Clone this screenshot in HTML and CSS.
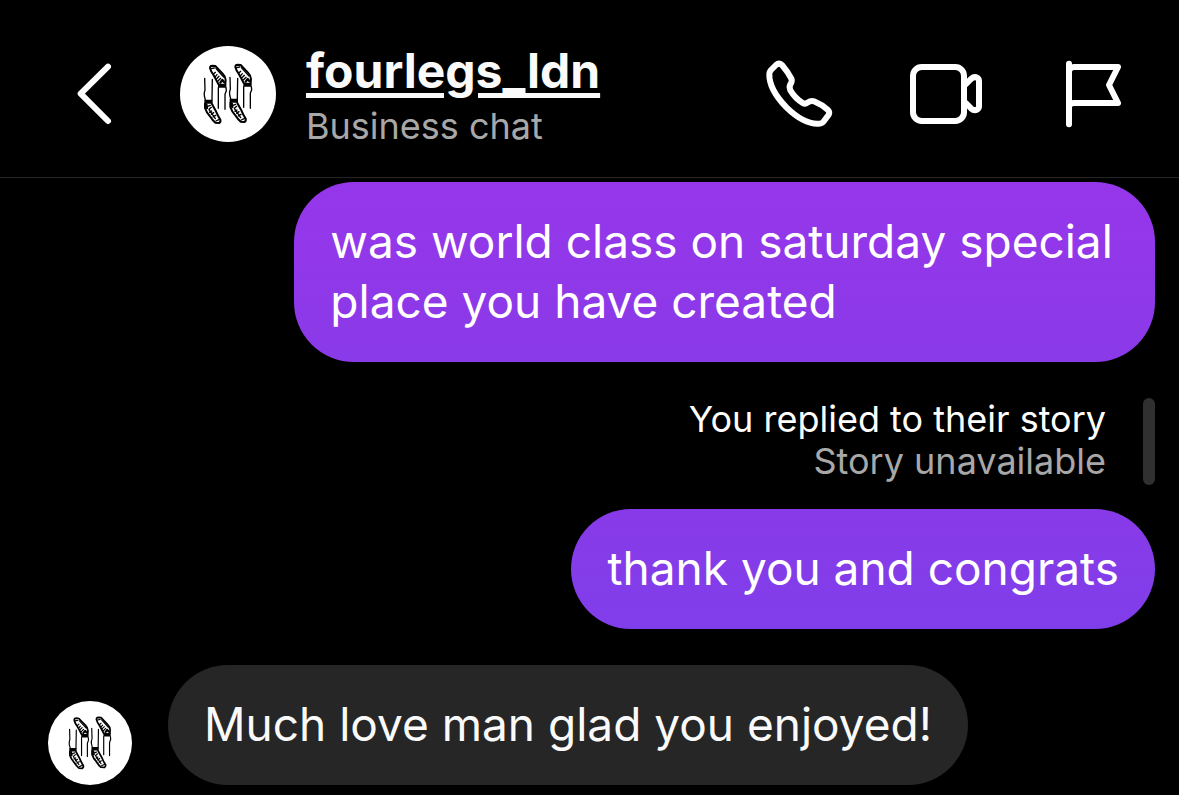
FILE: index.html
```
<!DOCTYPE html>
<html lang="en">
<head>
    <meta charset="UTF-8">
    <meta name="viewport" content="width=device-width, initial-scale=1.0">
    <title>fourlegs_ldn</title>
    <link rel="stylesheet" href="styles.css">
</head>
<body>
    <svg class="symbols" aria-hidden="true">
        <symbol id="logo" viewBox="30 30 288 288">
            <g id="legs" fill="none" stroke="#000" stroke-linecap="round" stroke-linejoin="round">
                <!-- upper boot -->
                <path stroke-width="6" d="M120 96Q120 89 127 89L136 90Q146 101 158 113Q167 122 167 132L166 143M120 96Q123 108 130 116Q137 128 145 144"/>
                <path stroke-width="4" d="M124 98L133 96M130 115L136 109M136 122L141 116M140 128L147 121M144 135L152 127M138 98L161 123"/>
                <path stroke-width="7" d="M151 140L157 132L162 138"/>
                <path stroke-width="12" stroke-linecap="butt" d="M144 149L169 149"/>
                <path stroke-width="4" d="M145 155L145 217M168 155L169 164L165 175L165 220"/>
                <!-- lower boot -->
                <path stroke-width="4" d="M104 127L105 162Q101 173 103 180L106 191M127 130L126 191"/>
                <path stroke-width="12" stroke-linecap="butt" d="M103 197L128 197"/>
                <path stroke-width="6" d="M105 203L105 216Q109 229 120 241Q128 254 136 260L147 261Q153 258 151 251Q144 241 138 226Q131 214 126 204"/>
                <path stroke-width="4" d="M113 211L121 208M117 220L124 214M125 225L119 229M131 230L124 235M137 238L129 243M148 250L138 255M118 222L136 248"/>
                <path stroke-width="7" d="M109 205L111 216"/>
            </g>
            <use href="#legs" x="76" y="-3"/>
        </symbol>
    </svg>

    <header class="header">
        <button class="icon-button" type="button" aria-label="Back">
            <svg width="40" height="72" viewBox="48 54 120 216">
                <path d="M144 80L62 161L144 243"/>
            </svg>
        </button>
        <svg class="avatar" role="img" aria-label="fourlegs_ldn"><use href="#logo"/></svg>
        <div class="title">
            <a class="name" href="#">fourlegs_ldn</a>
            <span class="subtitle">Business chat</span>
        </div>
        <div class="actions">
            <button class="icon-button" type="button" aria-label="Call">
                <svg width="74" height="72" viewBox="72 54 222 216">
                    <path d="M108 75Q117 67 126 75Q144 96 154 116Q157 122 153 130Q146 138 151 151Q165 175 188 189Q196 193 202 188Q213 181 222 184Q246 194 264 210Q270 216 266 224L252 243Q247 251 237 251C207 253 173 235 140 203C108 170 87 134 88 102Q88 96 93 90Z"/>
                </svg>
            </button>
            <button class="icon-button" type="button" aria-label="Video call">
                <svg width="78" height="72" viewBox="504 54 234 216">
                    <rect x="519" y="81" width="153" height="162" rx="26"/>
                    <path d="M676 134L694 116Q703 108 713 114Q717 117 717 123V199Q717 206 711 209Q702 213 694 206L676 188"/>
                </svg>
            </button>
            <button class="icon-button" type="button" aria-label="Labels">
                <svg width="68" height="72" viewBox="948 54 204 216">
                    <path d="M987 71V253M987 93Q990 81 1002 81H1134L1107 135L1134 189H1002Q990 189 987 200"/>
                </svg>
            </button>
        </div>
    </header>

    <main class="chat">
        <p class="bubble sent sent-first">was world class on saturday special place you have created</p>

        <div class="story">
            <div class="story-text">
                <p>You replied to their story</p>
                <p class="muted">Story unavailable</p>
            </div>
            <div class="story-bar"></div>
        </div>

        <p class="bubble sent sent-second">thank you and congrats</p>

        <div class="received-row">
            <svg class="avatar avatar-small" role="img" aria-label="fourlegs_ldn"><use href="#logo"/></svg>
            <p class="bubble received">Much love man glad you enjoyed!</p>
        </div>
    </main>
</body>
</html>
```
FILE: styles.css
```
* {
    box-sizing: border-box;
}
body {
    margin: 0;
    background-color: #000;
    color: #fff;
    font-family: Inter, "Liberation Sans", sans-serif;
    font-size: 46px;
}
p {
    margin: 0;
}
.symbols {
    display: none;
}
.header {
    display: flex;
    align-items: center;
    padding: 46px 55px 35px 76px;
    border-bottom: 1px solid #262626;
}
.icon-button {
    display: block;
    padding: 0;
    border: none;
    background: none;
    cursor: pointer;
}
.icon-button svg {
    display: block;
    fill: none;
    stroke: #fff;
    stroke-width: 18;
    stroke-linecap: round;
    stroke-linejoin: round;
}
.avatar {
    flex-shrink: 0;
    width: 96px;
    height: 96px;
    margin-left: 64px;
    border-radius: 50%;
    background-color: #fff;
}
.title {
    display: flex;
    flex-direction: column;
    align-items: flex-start;
    gap: 14px;
    margin-left: 30px;
}
.name {
    color: #fafafa;
    font-size: 48px;
    font-weight: 700;
    line-height: 50px;
    text-decoration: underline;
    text-decoration-thickness: 5px;
    text-underline-offset: 5px;
}
.subtitle {
    color: #a8a8a8;
    font-size: 36px;
    line-height: 32px;
}
.actions {
    display: flex;
    gap: 70px;
    margin-left: auto;
}
.chat {
    display: flex;
    flex-direction: column;
    align-items: flex-end;
    padding: 4px 24px 10px 48px;
}
.bubble {
    padding: 29px 36px 31px;
    border-radius: 60px;
    line-height: 60px;
}
.sent {
    max-width: 73vw;
}
.sent-first {
    background: linear-gradient(#9636ea, #8a3ae8);
}
.sent-second {
    background: linear-gradient(#883ae8, #803eea);
}
.story {
    display: flex;
    gap: 37px;
    margin: 36px 0 24px;
}
.story-text {
    padding-bottom: 3px;
    font-size: 36px;
    line-height: 42px;
    text-align: right;
}
.story-bar {
    width: 12px;
    border-radius: 6px;
    background-color: #303030;
}
.muted {
    color: #a8a8a8;
}
.received-row {
    display: flex;
    align-items: flex-end;
    align-self: flex-start;
    gap: 36px;
    margin-top: 36px;
}
.avatar-small {
    width: 84px;
    height: 84px;
    margin-left: 0;
}
.received {
    background-color: #262626;
    color: #fafafa;
}
```
